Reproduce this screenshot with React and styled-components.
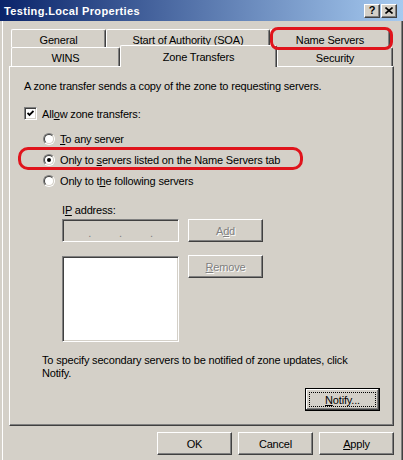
import styled, { createGlobalStyle, css } from 'styled-components';

const GlobalStyle = createGlobalStyle`
  html, body { margin: 0; padding: 0; }
  body {
    background: #d4d0c8;
    font-family: "Liberation Sans", Arial, sans-serif;
    font-size: 11px;
    letter-spacing: -0.17px;
    color: #000;
  }
`;

const raised = css`
  border-top: 1px solid #fff;
  border-left: 1px solid #fff;
  border-right: 1px solid #404040;
  border-bottom: 1px solid #404040;
  box-shadow: inset -1px -1px #808080;
`;

const sunken = css`
  border-top: 1px solid #808080;
  border-left: 1px solid #808080;
  border-right: 1px solid #fff;
  border-bottom: 1px solid #fff;
  box-shadow: inset 1px 1px #404040, inset -1px -1px #d4d0c8;
`;

const Window = styled.div`
  position: relative;
  width: 403px;
  height: 460px;
  box-sizing: border-box;
  background: #d4d0c8;
  display: flex;
  flex-direction: column;
  overflow: hidden;
`;

const TitleBar = styled.div`
  height: 21px;
  flex: none;
  display: flex;
  align-items: center;
  padding: 0 6px 0 4px;
  background: linear-gradient(to right, #0a246a, #a6caf0);
  color: #fff;
  font-weight: bold;
`;

const TitleText = styled.span`
  flex: 1;
  letter-spacing: 0.35px;
`;

const CaptionButtons = styled.div`
  display: flex;
  gap: 1px;
`;

const CaptionButton = styled.div`
  box-sizing: border-box;
  width: 16px;
  height: 14px;
  background: #d4d0c8;
  ${raised};
  display: flex;
  align-items: center;
  justify-content: center;
  color: #000;
  font-size: 11px;
  font-weight: bold;
  line-height: 1;
`;

const Body = styled.div`
  flex: 1;
  display: flex;
  flex-direction: column;
  padding: 8px 8px 0 7px;
  border-left: 2px solid #d4d0c8;
  border-right: 1px solid #404040;
  box-shadow: inset 1px 0 #fff, inset -1px 0 #808080;
`;

const TabStrip = styled.div`
  display: flex;
  flex-direction: column;
  padding-left: 2px;
  position: relative;
  z-index: 1;
`;

const TabRow = styled.div`
  display: flex;
  align-items: flex-start;
  height: ${p => p.$h}px;
`;

const Tab = styled.div`
  box-sizing: border-box;
  flex: none;
  width: ${p => p.$w}px;
  height: ${p => p.$h}px;
  display: flex;
  align-items: center;
  justify-content: center;
  padding-top: 2px;
  background: #d4d0c8;
  border-top: 1px solid #fff;
  border-left: 1px solid #fff;
  border-right: 1px solid #404040;
  box-shadow: inset -1px 0 #808080;
  border-radius: 2px 2px 0 0;
  ${p => p.$active && css`
    margin-top: -2px;
    height: ${p.$h + 3}px;
    padding-top: 0;
    position: relative;
    z-index: 2;
  `}
`;

const Panel = styled.div`
  box-sizing: border-box;
  height: 360px;
  ${raised};
  display: flex;
  flex-direction: column;
  padding: 13px 12px 0 14px;
`;

const Text = styled.p`
  margin: ${p => p.$mt || 0}px 0 0 ${p => p.$indent || 0}px;
  line-height: 13px;
`;

const CheckRow = styled.label`
  display: flex;
  align-items: center;
  gap: 5px;
  height: 13px;
  margin-top: 14px;
`;

const CheckBox = styled.span`
  box-sizing: border-box;
  width: 13px;
  height: 13px;
  background: #fff;
  ${sunken};
  display: flex;
  align-items: center;
  justify-content: center;
`;

const RadioGroup = styled.div`
  display: flex;
  flex-direction: column;
  margin-top: 8px;
  padding-left: 19px;
`;

const RadioRow = styled.label`
  display: flex;
  align-items: center;
  gap: 5px;
  height: 21px;
`;

const RadioOuter = styled.span`
  box-sizing: border-box;
  width: 12px;
  height: 12px;
  border-radius: 50%;
  border: 1px solid;
  border-color: #808080 #fff #fff #808080;
  display: flex;
`;

const RadioInner = styled.span`
  box-sizing: border-box;
  flex: 1;
  border-radius: 50%;
  border: 1px solid;
  border-color: #404040 #d4d0c8 #d4d0c8 #404040;
  background: #fff;
  display: flex;
  align-items: center;
  justify-content: center;
  &::after {
    content: "";
    width: 4px;
    height: 4px;
    border-radius: 50%;
    background: ${p => (p.$checked ? '#000' : 'transparent')};
  }
`;

const FieldRow = styled.div`
  display: flex;
  align-items: flex-start;
  gap: 9px;
  margin-top: ${p => p.$mt}px;
  padding-left: 38px;
`;

const IpField = styled.div`
  box-sizing: border-box;
  width: 117px;
  height: 23px;
  background: #d4d0c8;
  ${sunken};
  display: flex;
  align-items: flex-end;
  justify-content: center;
  gap: 28px;
  padding-bottom: 4px;
  color: #808080;
  line-height: 8px;
`;

const ListBox = styled.div`
  box-sizing: border-box;
  width: 117px;
  height: 86px;
  background: #fff;
  ${sunken};
`;

const Button = styled.button`
  box-sizing: border-box;
  flex: none;
  width: 75px;
  height: 23px;
  margin-top: ${p => p.$mt || 0}px;
  padding: 0;
  font: inherit;
  letter-spacing: inherit;
  color: #000;
  background: #d4d0c8;
  ${raised};
  display: flex;
  align-items: center;
  justify-content: center;
  ${p => p.disabled && css`
    color: #808080;
    text-shadow: 1px 1px #fff;
  `}
  ${p => p.$default && css`
    border: 1px solid #000;
    box-shadow: inset -1px -1px #404040, inset 1px 1px #fff, inset -2px -2px #808080;
    padding: 3px;
  `}
`;

const FocusRing = styled.span`
  flex: 1;
  align-self: stretch;
  display: flex;
  align-items: center;
  justify-content: center;
  border: 1px dotted #000;
`;

const NotifyRow = styled.div`
  display: flex;
  justify-content: flex-end;
  margin-top: 8px;
  padding-right: 1px;
`;

const ButtonBar = styled.div`
  display: flex;
  justify-content: flex-end;
  gap: 6px;
  margin-top: 6px;
`;

const Mark = styled.div`
  position: absolute;
  box-sizing: border-box;
  left: ${p => p.$x}px;
  top: ${p => p.$y}px;
  width: ${p => p.$w}px;
  height: ${p => p.$h}px;
  border: 3px solid #e0141c;
  border-radius: ${p => p.$r}px;
  pointer-events: none;
  z-index: 5;
`;

function Radio({ checked, children }) {
  return (
    <RadioRow>
      <RadioOuter>
        <RadioInner $checked={checked} />
      </RadioOuter>
      <span>{children}</span>
    </RadioRow>
  );
}

export default function App() {
  return (
    <>
      <GlobalStyle />
      <Window>
        <TitleBar>
          <TitleText>Testing.Local Properties</TitleText>
          <CaptionButtons>
            <CaptionButton>?</CaptionButton>
            <CaptionButton>
              <svg width="8" height="7" viewBox="0 0 8 7">
                <path d="M0.5 0.5 L7.5 6.5 M7.5 0.5 L0.5 6.5" stroke="#000" strokeWidth="1.6" />
              </svg>
            </CaptionButton>
          </CaptionButtons>
        </TitleBar>
        <Body>
          <TabStrip>
            <TabRow $h={18}>
              <Tab $w={95} $h={18}>General</Tab>
              <Tab $w={164} $h={18}>Start of Authority (SOA)</Tab>
              <Tab $w={120} $h={18}>Name Servers</Tab>
            </TabRow>
            <TabRow $h={19}>
              <Tab $w={109} $h={19}>WINS</Tab>
              <Tab $w={157} $h={19} $active>Zone Transfers</Tab>
              <Tab $w={116} $h={19}>Security</Tab>
            </TabRow>
          </TabStrip>
          <Panel>
            <Text>A zone transfer sends a copy of the zone to requesting servers.</Text>
            <CheckRow>
              <CheckBox>
                <svg width="7" height="7" viewBox="0 0 7 7">
                  <path d="M0.5 3 L2.5 5 L6.5 1" fill="none" stroke="#000" strokeWidth="1.8" />
                </svg>
              </CheckBox>
              <span>All<u>o</u>w zone transfers:</span>
            </CheckRow>
            <RadioGroup>
              <Radio><u>T</u>o any server</Radio>
              <Radio checked>Only to <u>s</u>ervers listed on the Name Servers tab</Radio>
              <Radio>Only to t<u>h</u>e following servers</Radio>
            </RadioGroup>
            <Text $mt={13} $indent={38}>I<u>P</u> address:</Text>
            <FieldRow $mt={2}>
              <IpField><span>.</span><span>.</span><span>.</span></IpField>
              <Button disabled>A<u>d</u>d</Button>
            </FieldRow>
            <FieldRow $mt={14}>
              <ListBox />
              <Button disabled $mt={-1}><u>R</u>emove</Button>
            </FieldRow>
            <Text $mt={12} $indent={18}>
              To specify secondary servers to be notified of zone updates, click<br />Notify.
            </Text>
            <NotifyRow>
              <Button $default><FocusRing><u>N</u>otify...</FocusRing></Button>
            </NotifyRow>
          </Panel>
          <ButtonBar>
            <Button>OK</Button>
            <Button>Cancel</Button>
            <Button><u>A</u>pply</Button>
          </ButtonBar>
        </Body>
        <Mark $x={270} $y={27} $w={123} $h={23} $r={8} />
        <Mark $x={18} $y={147} $w={285} $h={23} $r={10} />
      </Window>
    </>
  );
}
